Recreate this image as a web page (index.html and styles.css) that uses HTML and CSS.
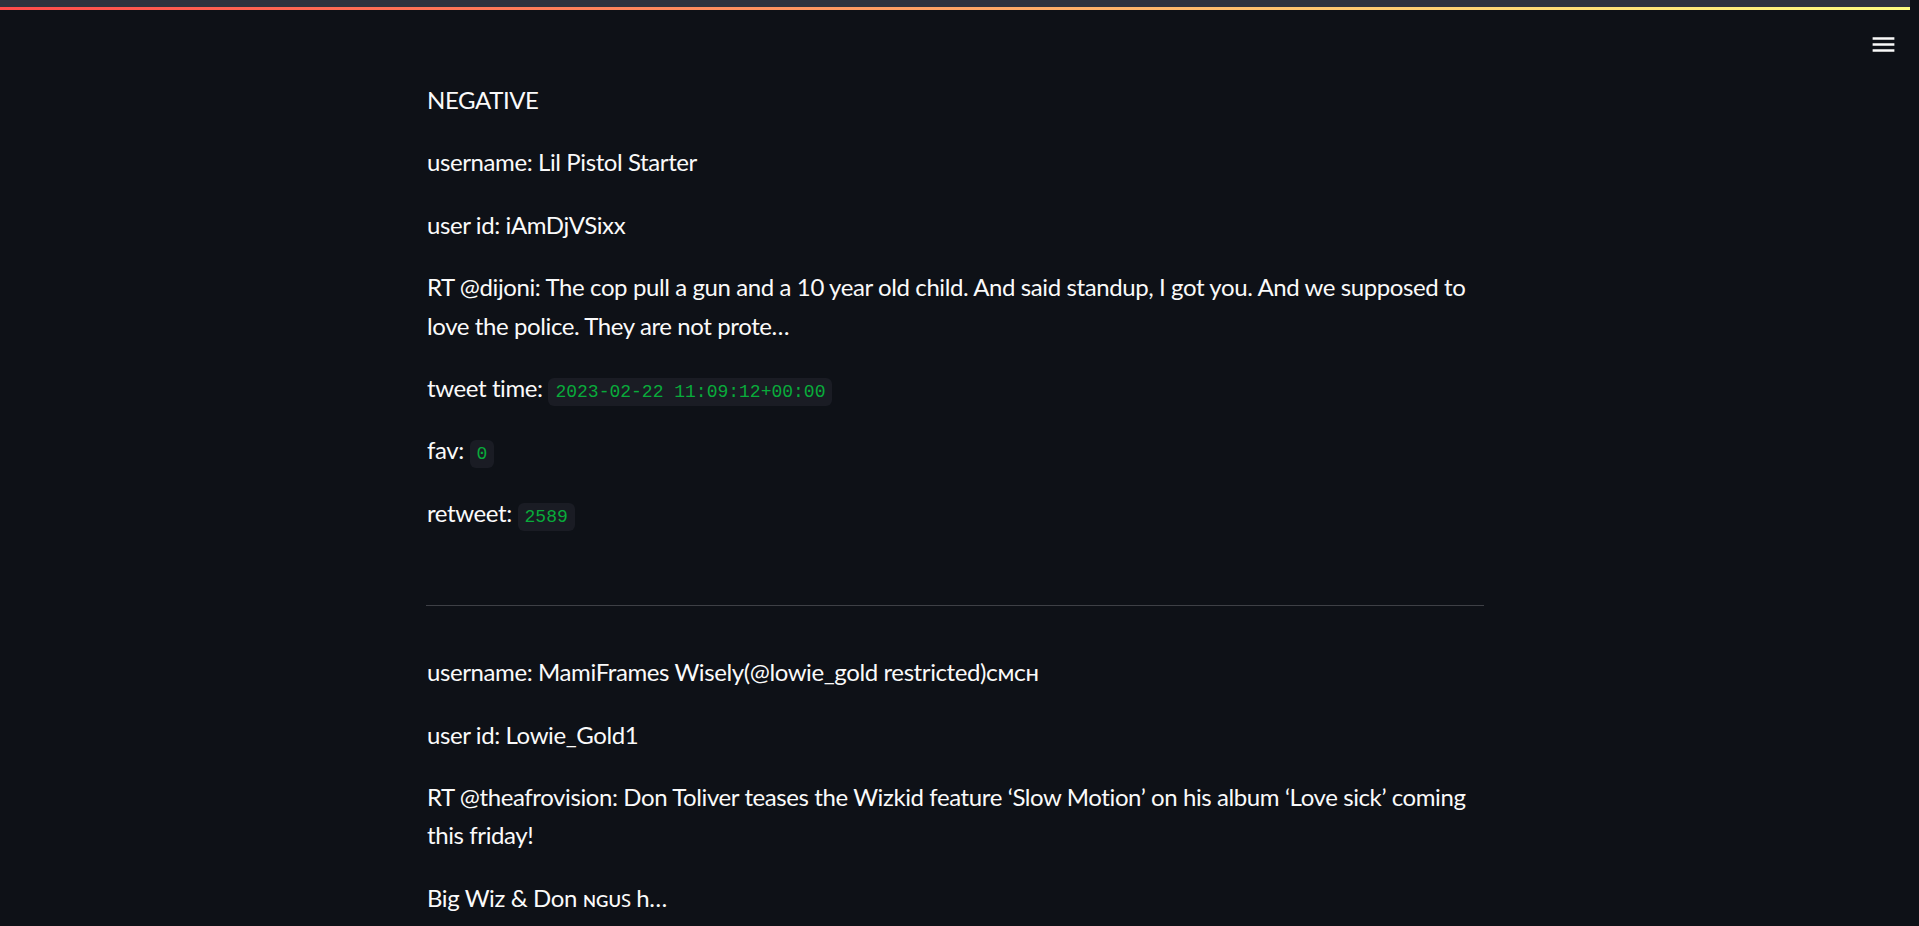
FILE: index.html
```html
<!DOCTYPE html>
<html lang="en">
<head>
<meta charset="utf-8">
<title>Tweets</title>
<link rel="stylesheet" href="styles.css">
</head>
<body>
<div class="app">
  <div class="topstrip"></div>
  <div class="decoration"></div>
  <button class="menu" aria-label="Main menu">
    <svg viewBox="0 0 24 24" width="29" height="29"><path fill="currentColor" d="M3 18h18v-2H3v2zm0-5h18v-2H3v2zm0-7v2h18V6H3z"/></svg>
  </button>
  <main class="main">
    <p>NEGATIVE</p>
    <p>username: Lil Pistol Starter</p>
    <p>user id: iAmDjVSixx</p>
    <p>RT @dijoni: The cop pull a gun and a 10 year old child. And said standup, I got you. And we supposed to love the police. They are not prote…</p>
    <p>tweet time: <code>2023-02-22 11:09:12+00:00</code></p>
    <p>fav: <code>0</code></p>
    <p>retweet: <code>2589</code></p>
    <hr class="divider">
    <p>username: MamiFrames Wisely(@lowie_gold restricted)ᴄᴍᴄʜ</p>
    <p>user id: Lowie_Gold1</p>
    <p>RT @theafrovision: Don Toliver teases the Wizkid feature ‘Slow Motion’ on his album ‘Love sick’ coming this friday!</p>
    <p>Big Wiz &amp; Don ɴɢᴜꜱ h…</p>
  </main>
</div>
</body>
</html>
```

FILE: styles.css
```css
html, body {
  margin: 0;
  padding: 0;
  background: #0e1117;
  overflow: hidden;
}
body {
  font-family: "Lato", "Noto Sans", "DejaVu Sans", sans-serif;
  color: #fafafa;
  font-size: 24px;
  line-height: 38.4px;
  letter-spacing: -0.4px;
}
.app {
  position: relative;
  min-height: 926px;
  padding-right: 9px;
}
.topstrip {
  height: 7px;
  background: #2f323e;
}
.decoration {
  height: 3px;
  background: linear-gradient(90deg, #ff4b4b, #fffd80);
}
.menu {
  position: absolute;
  top: 30px;
  left: 1869px;
  width: 29px;
  height: 29px;
  padding: 0;
  border: 0;
  background: transparent;
  color: #fafafa;
  display: flex;
}
.main {
  max-width: 1058px;
  margin: 0 auto;
  padding-top: 71px;
}
.main p {
  margin: 0 0 24px 0;
  padding-left: 1px;
}
code {
  font-family: "Liberation Mono", "DejaVu Sans Mono", monospace;
  font-size: 18px;
  line-height: 20px;
  letter-spacing: 0;
  color: #09ab3b;
  background: #1a1c24;
  padding: 4px 7px;
  border-radius: 6px;
}
.divider {
  margin: 73px 0 47px 0;
  border: 0;
  border-bottom: 1px solid #3e4046;
  height: 0;
}
```
